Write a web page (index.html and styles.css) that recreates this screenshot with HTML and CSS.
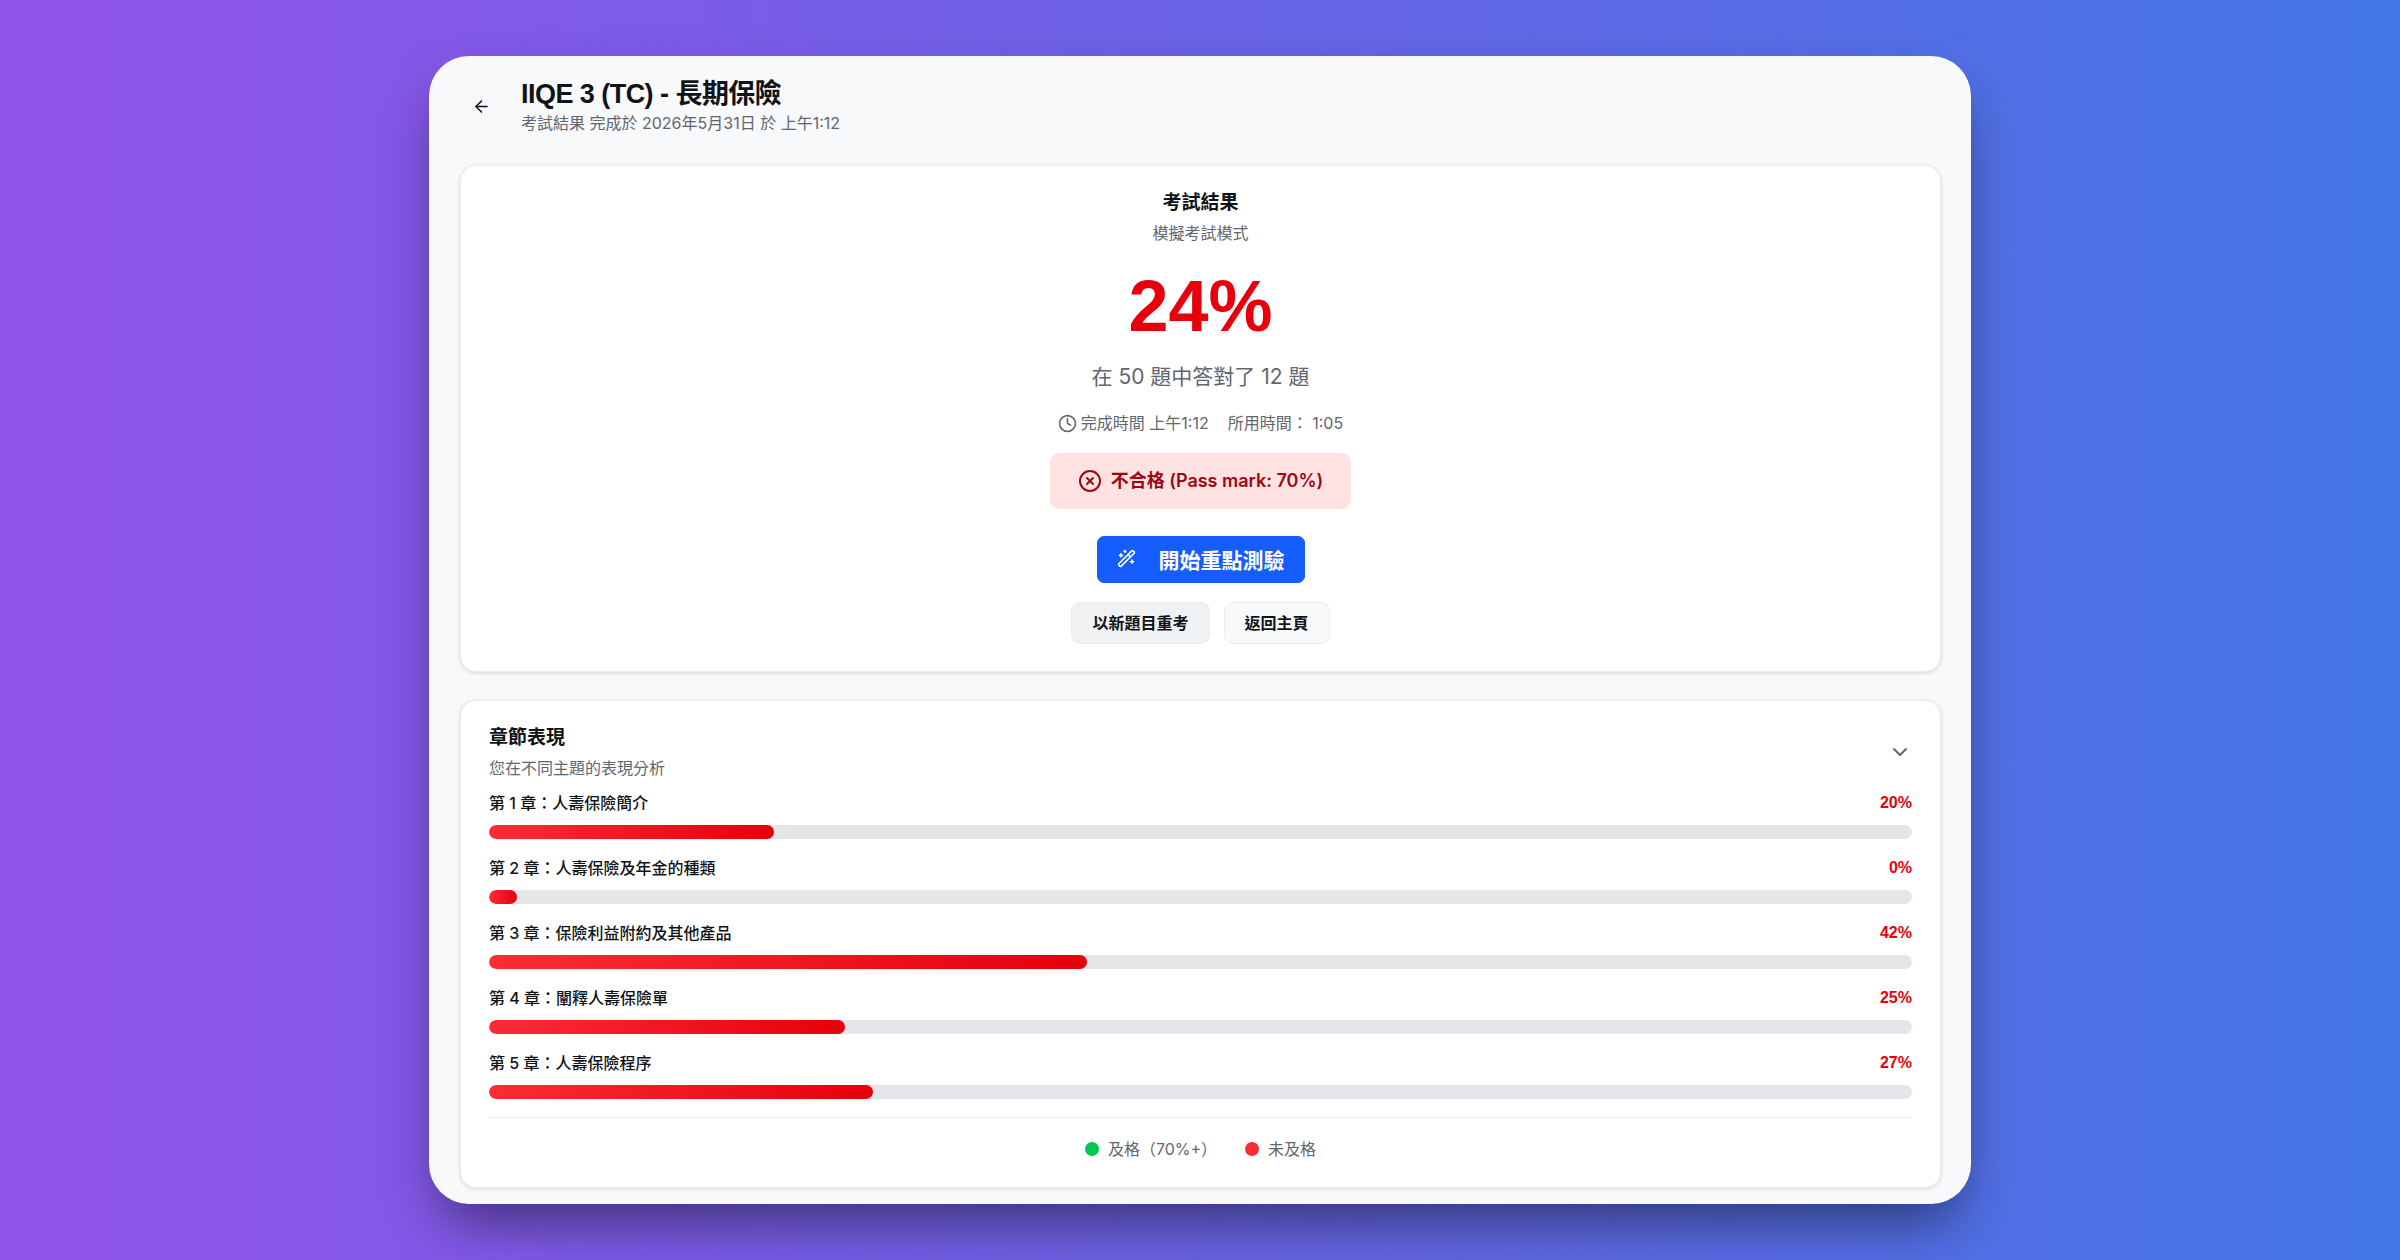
FILE: index.html
```
<!DOCTYPE html>
<html lang="zh-Hant">
<head>
  <meta charset="UTF-8" />
  <meta name="viewport" content="width=device-width, initial-scale=1.0"/>
  <title>IIQE 3 (TC) - 長期保險</title>
  <link rel="stylesheet" href="styles.css">
</head>
<body>
  <main class="panel">
    <header class="page-header">
      <button class="back-btn" type="button" aria-label="返回">
        <svg class="icon" viewBox="0 0 24 24"><path d="m12 19-7-7 7-7"/><path d="M19 12H5"/></svg>
      </button>
      <div>
        <h1>IIQE 3 (TC) - 長期保險</h1>
        <p class="muted">考試結果 完成於 2026年5月31日 於 上午1:12</p>
      </div>
    </header>

    <section class="card result">
      <h2>考試結果</h2>
      <p class="muted">模擬考試模式</p>
      <div class="score">24%</div>
      <p class="summary">在 50 題中答對了 12 題</p>
      <div class="times">
        <span class="time">
          <svg class="icon" viewBox="0 0 24 24"><circle cx="12" cy="12" r="10"/><path d="M12 6v6l4 2"/></svg>
          完成時間 上午1:12
        </span>
        <span>所用時間： 1:05</span>
      </div>
      <div class="badge">
        <svg class="icon icon-lg" viewBox="0 0 24 24"><circle cx="12" cy="12" r="10"/><path d="m15 9-6 6"/><path d="m9 9 6 6"/></svg>
        <span>不合格 (Pass mark: 70%)</span>
      </div>
      <button class="btn btn-primary" type="button">
        <svg class="icon" viewBox="0 0 24 24"><path d="m21.64 3.64-1.28-1.28a1.21 1.21 0 0 0-1.72 0L2.36 18.64a1.21 1.21 0 0 0 0 1.72l1.28 1.28a1.2 1.2 0 0 0 1.72 0L21.64 5.36a1.2 1.2 0 0 0 0-1.72"/><path d="m14 7 3 3"/><path d="M5 6v4"/><path d="M19 14v4"/><path d="M10 2v2"/><path d="M7 8H3"/><path d="M21 16h-4"/><path d="M11 3H9"/></svg>
        開始重點測驗
      </button>
      <div class="actions">
        <button class="btn btn-secondary" type="button">以新題目重考</button>
        <button class="btn btn-outline" type="button">返回主頁</button>
      </div>
    </section>

    <section class="card chapters">
      <div class="chapters-header">
        <div>
          <h2>章節表現</h2>
          <p class="muted">您在不同主題的表現分析</p>
        </div>
        <button class="toggle" type="button" aria-label="收合">
          <svg class="icon icon-lg" viewBox="0 0 24 24"><path d="m6 9 6 6 6-6"/></svg>
        </button>
      </div>

      <div class="chapter-list">
        <div class="chapter">
          <div class="chapter-label"><span>第 1 章：人壽保險簡介</span><span class="percent">20%</span></div>
          <div class="bar"><div class="fill" style="width: 20%"></div></div>
        </div>
        <div class="chapter">
          <div class="chapter-label"><span>第 2 章：人壽保險及年金的種類</span><span class="percent">0%</span></div>
          <div class="bar"><div class="fill" style="width: 2%"></div></div>
        </div>
        <div class="chapter">
          <div class="chapter-label"><span>第 3 章：保險利益附約及其他產品</span><span class="percent">42%</span></div>
          <div class="bar"><div class="fill" style="width: 42%"></div></div>
        </div>
        <div class="chapter">
          <div class="chapter-label"><span>第 4 章：闡釋人壽保險單</span><span class="percent">25%</span></div>
          <div class="bar"><div class="fill" style="width: 25%"></div></div>
        </div>
        <div class="chapter">
          <div class="chapter-label"><span>第 5 章：人壽保險程序</span><span class="percent">27%</span></div>
          <div class="bar"><div class="fill" style="width: 27%"></div></div>
        </div>
      </div>

      <div class="legend">
        <span class="legend-item"><span class="dot dot-pass"></span>及格（70%+）</span>
        <span class="legend-item"><span class="dot dot-fail"></span>未及格</span>
      </div>
    </section>
  </main>
</body>
</html>
```
FILE: styles.css
```
* { box-sizing: border-box; }
body {
  margin: 0;
  min-height: 100vh;
  padding: 56px 24px;
  font-family: Inter, "Noto Sans CJK TC", sans-serif;
  font-size: 16px;
  line-height: 24px;
  color: #101318;
  background: linear-gradient(to right, #9153ea, #6a63e5 50%, #4477e6);
}
h1, h2, p { margin: 0; }
button {
  font-family: inherit;
  color: inherit;
  cursor: pointer;
}
.icon {
  width: 19px;
  height: 19px;
  flex: none;
  fill: none;
  stroke: currentColor;
  stroke-width: 2;
  stroke-linecap: round;
  stroke-linejoin: round;
}
.icon-lg {
  width: 24px;
  height: 24px;
}
.muted { color: #62666f; }

.panel {
  max-width: 1542px;
  margin: 0 auto;
  padding: 21px 30px 16px 31px;
  background: #f8f9fb;
  border-radius: 40px;
  box-shadow: 0 28px 56px -12px rgba(0, 0, 0, 0.5);
}
.page-header {
  display: flex;
  align-items: center;
  gap: 19px;
  margin-bottom: 30px;
}
.back-btn {
  display: flex;
  align-items: center;
  justify-content: center;
  width: 42px;
  height: 42px;
  padding: 0;
  border: none;
  background: none;
}
h1 {
  font-family: "Liberation Sans", "Noto Sans CJK TC", sans-serif;
  font-size: 27px;
  line-height: 34px;
  letter-spacing: -0.02em;
}
h2 {
  font-size: 19px;
  line-height: 28px;
  margin-bottom: 4px;
}

.card {
  background: white;
  border: 1px solid #ebecef;
  border-radius: 16px;
  box-shadow: 0 1px 4px rgba(0, 0, 0, 0.14);
}
.result {
  display: flex;
  flex-direction: column;
  align-items: center;
  padding: 23px 28px 27px;
  margin-bottom: 28px;
}
.score {
  margin: 26px 0 20px;
  font-family: "Liberation Sans", sans-serif;
  font-size: 72px;
  font-weight: bold;
  line-height: 70px;
  color: #e7000b;
}
.summary {
  font-size: 21px;
  line-height: 32px;
  color: #62666f;
}
.times {
  display: flex;
  gap: 19px;
  margin: 18px 0;
  color: #62666f;
}
.time {
  display: flex;
  align-items: center;
  gap: 4px;
}
.badge {
  display: flex;
  align-items: center;
  gap: 9px;
  padding: 14px 28px;
  font-size: 18px;
  font-weight: 600;
  line-height: 28px;
  color: #9f0712;
  background: #ffe2e2;
  border-radius: 9px;
}
.btn {
  display: flex;
  align-items: center;
  height: 42px;
  padding: 0 20px 2px;
  font-size: 16px;
  font-weight: 600;
  border: 1px solid #ebecef;
  border-radius: 9px;
}
.btn-primary {
  gap: 23px;
  height: 47px;
  margin: 27px 0 19px;
  padding: 0 19px 2px;
  font-size: 21px;
  font-weight: bold;
  color: white;
  background: #155dfc;
  border-color: #155dfc;
  border-radius: 7px;
}
.btn-secondary { background: #f0f1f3; }
.btn-outline { background: #f8f9fb; }
.actions {
  display: flex;
  gap: 14px;
}

.chapters { padding: 23px 28px 26px; }
.chapters-header {
  display: flex;
  align-items: center;
  justify-content: space-between;
  margin-bottom: 11px;
}
.toggle {
  display: flex;
  padding: 0;
  border: none;
  background: none;
  color: #62666f;
}
.chapter-list {
  display: flex;
  flex-direction: column;
  gap: 17px;
}
.chapter-label {
  display: flex;
  justify-content: space-between;
  margin-bottom: 10px;
  font-weight: 500;
}
.percent {
  font-family: "Liberation Sans", sans-serif;
  font-weight: bold;
  color: #e7000b;
}
.bar {
  height: 14px;
  border-radius: 7px;
  background: #e5e6ea;
  overflow: hidden;
}
.fill {
  height: 100%;
  border-radius: 7px;
  background: linear-gradient(to right, #fb2c36, #e7000b);
}
.legend {
  display: flex;
  justify-content: center;
  gap: 28px;
  margin-top: 18px;
  padding-top: 19px;
  border-top: 1px solid #ebecef;
  color: #62666f;
}
.legend-item {
  display: flex;
  align-items: center;
  gap: 9px;
}
.dot {
  width: 14px;
  height: 14px;
  border-radius: 50%;
}
.dot-pass { background: #00c950; }
.dot-fail { background: #fb2c36; }
```
